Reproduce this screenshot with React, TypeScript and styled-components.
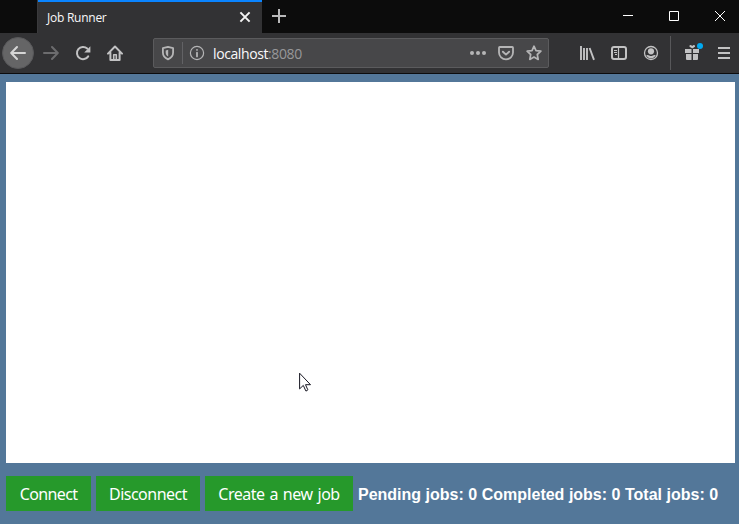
import React from "react";
import styled, { createGlobalStyle } from "styled-components";

const GlobalStyle = createGlobalStyle`
  * { box-sizing: border-box; }
  html, body { margin: 0; padding: 0; }
  body { overflow: hidden; }
`;

const Window = styled.div`
  width: 739px;
  height: 524px;
  display: flex;
  flex-direction: column;
  overflow: hidden;
  background: #537799;
  font-family: "Open Sans", "Noto Sans", sans-serif;
`;

const TabBar = styled.header`
  height: 33px;
  flex: none;
  display: flex;
  background: #0c0c0c;
  padding-left: 37px;
`;

const Tab = styled.div`
  width: 225px;
  height: 33px;
  display: flex;
  align-items: center;
  justify-content: space-between;
  padding: 1px 9px 0 9px;
  border-left: 1px solid #3a3a3c;
  background: #323234;
  box-shadow: inset 0 2px 0 #0a84ff;
`;

const TabTitle = styled.span`
  color: #f9f9fa;
  font-size: 12px;
  line-height: 16px;
  letter-spacing: -0.25px;
  padding-top: 2px;
`;

const NewTab = styled.div`
  width: 34px;
  height: 32px;
  display: grid;
  place-items: center;
`;

const WindowControls = styled.div`
  margin-left: auto;
  display: flex;
`;

const WindowControl = styled.div`
  width: 46px;
  height: 32px;
  display: grid;
  place-items: center;

  &:last-child { width: 42px; padding-left: 4px; }
`;

const Toolbar = styled.nav`
  height: 41px;
  flex: none;
  display: flex;
  align-items: center;
  padding-left: 2px;
  background: #323234;
  border-bottom: 1px solid #0c0c0d;
`;

const ToolButton = styled.div<{ $dim?: boolean }>`
  width: 32px;
  height: 32px;
  flex: none;
  display: grid;
  place-items: center;
  color: ${(p) => (p.$dim ? "#6c6c6e" : "#c2c2c3")};
`;

const BackButton = styled(ToolButton)`
  border-radius: 50%;
  background: #656566;
  border: 1px solid #58585a;
  color: #d6d6d6;
  margin-right: 1px;
`;

const UrlBar = styled.div`
  width: 396px;
  height: 30px;
  flex: none;
  margin-left: 22px;
  margin-right: 22px;
  display: flex;
  align-items: center;
  background: #474749;
  border: 1px solid #5b5b5d;
  border-radius: 2px;
  color: #b5b5b6;
`;

const UrlIcon = styled.div`
  width: 28px;
  height: 28px;
  flex: none;
  display: grid;
  place-items: center;
`;

const UrlDivider = styled.div`
  width: 1px;
  height: 22px;
  background: #626265;
`;

const Url = styled.div`
  flex: 1;
  padding-left: 2px;
  padding-top: 2px;
  color: #f9f9fa;
  font-size: 14px;
  line-height: 18px;
  letter-spacing: -0.4px;

  span { color: #98989a; }
`;

const ToolDivider = styled.div`
  width: 1px;
  height: 34px;
  flex: none;
  margin-left: 3px;
  margin-right: 5px;
  background: #58585a;
`;

const Page = styled.main`
  flex: 1;
  display: flex;
  flex-direction: column;
  padding: 8px 4px 13px 6px;
`;

const Output = styled.section`
  height: 381px;
  background: #fff;
  position: relative;
`;

const Pointer = styled.svg`
  position: absolute;
  left: 293px;
  top: 290px;
`;

const Controls = styled.footer`
  display: flex;
  align-items: center;
  gap: 5px;
  margin-top: 13px;
`;

const Button = styled.button<{ $width: number; $tracking: number }>`
  width: ${(p) => p.$width}px;
  height: 35px;
  flex: none;
  border: 0;
  padding: 2px 0 0;
  background: #26992b;
  color: #fff;
  font-family: "Noto Sans", sans-serif;
  font-size: 16px;
  line-height: 33px;
  letter-spacing: ${(p) => p.$tracking}px;
  word-spacing: 1.2px;
  white-space: nowrap;
`;

const Stats = styled.div`
  color: #fff;
  font: bold 16px/20px "Liberation Sans", Arial, sans-serif;
  word-spacing: 0.05px;
  white-space: nowrap;
  padding-top: 2px;
`;

const Icon = ({ size = 16, children }: { size?: number; children: React.ReactNode }) => (
  <svg
    width={size}
    height={size}
    viewBox="0 0 16 16"
    fill="none"
    stroke="currentColor"
    strokeWidth="2"
    strokeLinecap="round"
    strokeLinejoin="round"
  >
    {children}
  </svg>
);

export default function App() {
  return (
    <>
      <GlobalStyle />
      <Window>
        <TabBar>
          <Tab>
            <TabTitle>Job Runner</TabTitle>
            <svg width="16" height="16" viewBox="0 0 16 16" stroke="#f4f4f4" strokeWidth="2">
              <path d="M3.4 3.4l9.2 9.2M12.6 3.4l-9.2 9.2" />
            </svg>
          </Tab>
          <NewTab>
            <svg width="14" height="14" viewBox="0 0 14 14" stroke="#b9b9ba" strokeWidth="2">
              <path d="M7 0v14M0 7h14" />
            </svg>
          </NewTab>
          <WindowControls>
            <WindowControl>
              <svg width="10" height="10" stroke="#fff"><path d="M0 4.5h10" /></svg>
            </WindowControl>
            <WindowControl>
              <svg width="10" height="10" fill="none" stroke="#fff"><path d="M.5.5h9v9h-9z" /></svg>
            </WindowControl>
            <WindowControl>
              <svg width="10" height="10" stroke="#fff"><path d="M0 0l10 10M10 0L0 10" /></svg>
            </WindowControl>
          </WindowControls>
        </TabBar>

        <Toolbar>
          <BackButton>
            <Icon><path d="M15 8H1.5M7 2L1.2 8 7 14" /></Icon>
          </BackButton>
          <ToolButton $dim>
            <Icon><path d="M1 8h13.5M9 2l5.8 6L9 14" /></Icon>
          </ToolButton>
          <ToolButton>
            <Icon>
              <path d="M13.2 11.4A6.1 6.1 0 1 1 12.2 3.6" />
              <path d="M15.4 1.2V7.4H9.2z" fill="currentColor" stroke="none" />
            </Icon>
          </ToolButton>
          <ToolButton>
            <Icon>
              <path d="M1 8.6L8 1.5l7 7.1M3.4 7.8V15h9.2V7.8" />
              <path d="M6.7 15V9.8h2.6V15" strokeWidth="1.6" />
            </Icon>
          </ToolButton>

          <UrlBar>
            <UrlIcon>
              <Icon>
                <path d="M8 1.9l5.1 1.3v4.4c0 3.3-1.9 5.4-5.1 6.7-3.2-1.3-5.1-3.4-5.1-6.7V3.2z" strokeWidth="1.8" />
                <path d="M8.2 4.8v6.8C6.7 10.8 5.7 9.4 5.7 7.4V5.4z" fill="currentColor" stroke="none" />
              </Icon>
            </UrlIcon>
            <UrlDivider />
            <UrlIcon>
              <Icon>
                <circle cx="8" cy="8" r="6.6" strokeWidth="1.2" />
                <path d="M8 7.7v3.7M8 4.8v.1" strokeWidth="1.8" />
              </Icon>
            </UrlIcon>
            <Url>localhost<span>:8080</span></Url>
            <UrlIcon>
              <Icon>
                <g fill="currentColor" stroke="none">
                  <circle cx="2" cy="8" r="2" />
                  <circle cx="8" cy="8" r="2" />
                  <circle cx="14" cy="8" r="2" />
                </g>
              </Icon>
            </UrlIcon>
            <UrlIcon>
              <Icon>
                <path d="M1.7 2h12.6q.7 0 .7.7V7.5a7 6.8 0 0 1-14 0V2.7Q1 2 1.7 2z" strokeWidth="1.8" />
                <path d="M4.9 6.7L8 9.6l3.1-2.9" strokeWidth="1.9" />
              </Icon>
            </UrlIcon>
            <UrlIcon>
              <Icon>
                <path
                  d="M8 1.2l2 4.4 4.9.6-3.6 3.3.9 4.9L8 12l-4.2 2.4.9-4.9L1.1 6.2 6 5.6z"
                  strokeWidth="1.7"
                />
              </Icon>
            </UrlIcon>
          </UrlBar>

          <ToolButton>
            <Icon>
              <path d="M2 1v14M5 3v12M8 3v12M10.6 3L15 14.8" strokeLinecap="butt" strokeWidth="1.9" />
            </Icon>
          </ToolButton>
          <ToolButton>
            <Icon>
              <rect x="1" y="2" width="14" height="12" rx="2" />
              <path d="M7.5 2v12" strokeWidth="1.2" />
              <path d="M3 5.5h3M3 7.5h3M4 9.5h2" strokeWidth="1" strokeLinecap="butt" />
            </Icon>
          </ToolButton>
          <ToolButton>
            <Icon>
              <circle cx="8" cy="8" r="6.5" strokeWidth="1.3" />
              <g fill="currentColor" stroke="none">
                <circle cx="8" cy="6.3" r="3.1" />
                <path d="M3.2 10.2q2-.5 3 .3 1.8 1 3.6 0 1-.8 3-.3-1.5 3.1-4.8 3.1t-4.8-3.1z" />
              </g>
            </Icon>
          </ToolButton>
          <ToolDivider />
          <ToolButton>
            <svg width="22" height="20" viewBox="0 0 22 20" fill="#c2c2c3">
              <path d="M4 6h6.5v4H4zM12 6h6v4h-6zM5 11h5.5v6H6q-1 0-1-1zM12 11h5v5q0 1-1 1h-4z" />
              <path d="M11 5.2L8.5 3.8V2.4q1.2-1 2.7.5Q12.7 1.4 14 2.4v1.4L11.7 5.2z" />
              <circle cx="19" cy="3" r="3" fill="#00aaf2" />
            </svg>
          </ToolButton>
          <ToolButton>
            <Icon>
              <path d="M2 3h12M2 8h12M2 13h12" strokeLinecap="butt" />
            </Icon>
          </ToolButton>
        </Toolbar>

        <Page>
          <Output>
            <Pointer width="14" height="21" viewBox="0 0 14 21">
              <path
                d="M.6 1.2v15.7l3.7-3.5 2.5 5.5q1.5.2 2-1.1l-2.3-5.1h5z"
                fill="#fff"
                stroke="#171722"
              />
            </Pointer>
          </Output>
          <Controls>
            <Button $width={85} $tracking={-0.62}>Connect</Button>
            <Button $width={104} $tracking={-0.52}>Disconnect</Button>
            <Button $width={148} $tracking={-0.48}>Create a new job</Button>
            <Stats>Pending jobs: 0 Completed jobs: 0 Total jobs: 0</Stats>
          </Controls>
        </Page>
      </Window>
    </>
  );
}
